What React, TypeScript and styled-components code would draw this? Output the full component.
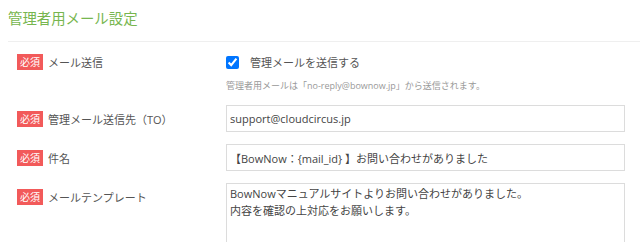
import React from 'react'
import styled, { createGlobalStyle } from 'styled-components'

const GlobalStyle = createGlobalStyle`
  html, body {
    margin: 0;
    padding: 0;
    background: #fff;
  }
  body {
    font-family: 'Open Sans', 'Noto Sans CJK JP', sans-serif;
    color: #555;
  }
`

const Section = styled.section`
  padding: 8px 0 0 8px;
`

const SectionTitle = styled.h2`
  margin: 0;
  padding-bottom: 11px;
  border-bottom: 1px solid #efefef;
  font-size: 14.4px;
  font-weight: 400;
  line-height: 22px;
  color: #77b64f;
`

const Form = styled.div`
  display: grid;
  grid-template-columns: 209px 399px;
  row-gap: 12px;
  padding: 10px 0 0 9px;
`

const LabelCell = styled.div<{ $tall?: boolean }>`
  display: flex;
  align-items: center;
  gap: 5px;
  height: ${(p) => (p.$tall ? '20px' : '27px')};
  font-size: 11px;
  color: #555;
`

const Required = styled.span`
  display: inline-flex;
  align-items: center;
  justify-content: center;
  width: 26px;
  height: 16px;
  background: #f25a5a;
  color: #fff;
  font-size: 10px;
  line-height: 1;
`

const FieldCell = styled.div`
  display: flex;
  flex-direction: column;
`

const CheckRow = styled.label`
  display: flex;
  align-items: center;
  gap: 11px;
  height: 20px;
  font-size: 11px;
  color: #555;

  input {
    margin: 0;
    width: 13px;
    height: 13px;
  }
`

const Note = styled.p`
  margin: 7px 0 0;
  font-size: 9px;
  line-height: 14px;
  color: #999;
`

const TextInput = styled.input`
  box-sizing: border-box;
  width: 100%;
  height: 27px;
  padding: 0 3px;
  border: 1px solid #dcdcdc;
  font-family: inherit;
  font-size: 11px;
  color: #444;
  outline: none;
`

const TextArea = styled.textarea`
  box-sizing: border-box;
  width: 100%;
  height: 100px;
  padding: 1px 3px;
  border: 1px solid #dcdcdc;
  font-family: inherit;
  font-size: 11px;
  line-height: 17px;
  color: #444;
  resize: none;
  outline: none;
`

const Label: React.FC<{ text: string; tall?: boolean }> = ({ text, tall }) => (
  <LabelCell $tall={tall}>
    <Required>必須</Required>
    {text}
  </LabelCell>
)

export default function App() {
  return (
    <>
      <GlobalStyle />
      <Section>
        <SectionTitle>管理者用メール設定</SectionTitle>
        <Form>
          <Label text="メール送信" tall />
          <FieldCell>
            <CheckRow>
              <input type="checkbox" defaultChecked />
              管理メールを送信する
            </CheckRow>
            <Note>管理者用メールは「no-reply@bownow.jp」から送信されます。</Note>
          </FieldCell>

          <Label text="管理メール送信先（TO）" />
          <FieldCell>
            <TextInput defaultValue="support@cloudcircus.jp" />
          </FieldCell>

          <Label text="件名" />
          <FieldCell>
            <TextInput defaultValue="【BowNow：{mail_id} 】お問い合わせがありました" />
          </FieldCell>

          <Label text="メールテンプレート" />
          <FieldCell>
            <TextArea
              defaultValue={'BowNowマニュアルサイトよりお問い合わせがありました。\n内容を確認の上対応をお願いします。'}
            />
          </FieldCell>
        </Form>
      </Section>
    </>
  )
}
